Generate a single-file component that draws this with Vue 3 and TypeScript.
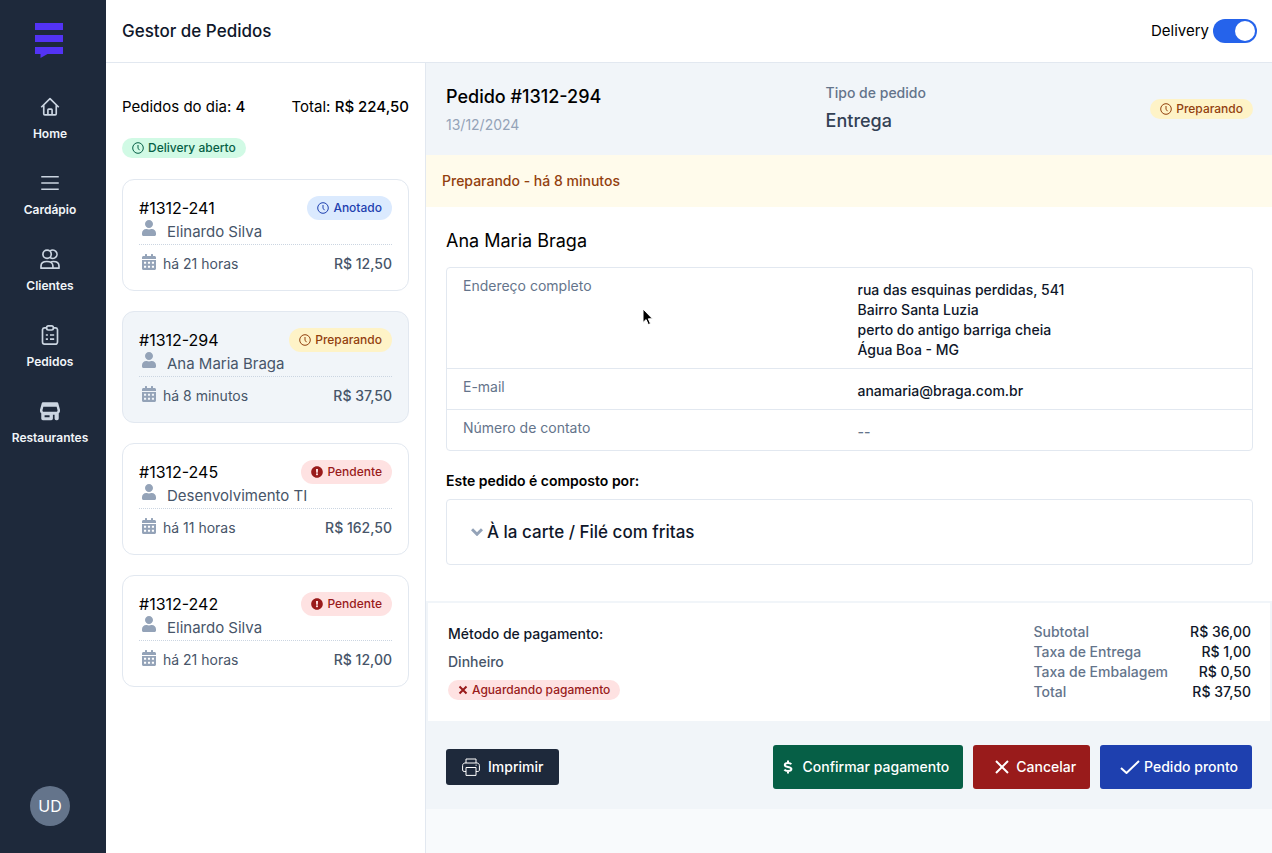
<script setup lang="ts">
import { ref } from 'vue'

type Status = 'anotado' | 'preparando' | 'pendente'

interface Order {
  id: string
  customer: string
  time: string
  total: string
  status: Status
}

const statusLabel: Record<Status, string> = {
  anotado: 'Anotado',
  preparando: 'Preparando',
  pendente: 'Pendente',
}

const orders: Order[] = [
  { id: '#1312-241', customer: 'Elinardo Silva', time: 'há 21 horas', total: 'R$ 12,50', status: 'anotado' },
  { id: '#1312-294', customer: 'Ana Maria Braga', time: 'há 8 minutos', total: 'R$ 37,50', status: 'preparando' },
  { id: '#1312-245', customer: 'Desenvolvimento TI', time: 'há 11 horas', total: 'R$ 162,50', status: 'pendente' },
  { id: '#1312-242', customer: 'Elinardo Silva', time: 'há 21 horas', total: 'R$ 12,00', status: 'pendente' },
]

const totals = [
  { label: 'Subtotal', value: 'R$ 36,00' },
  { label: 'Taxa de Entrega', value: 'R$ 1,00' },
  { label: 'Taxa de Embalagem', value: 'R$ 0,50' },
  { label: 'Total', value: 'R$ 37,50' },
]

const selected = ref('#1312-294')
const delivery = ref(true)
const expanded = ref(false)
</script>

<template>
  <div class="app">
    <aside class="sidebar">
      <svg class="logo" viewBox="0 0 28 35" aria-hidden="true">
        <path d="M0 0h28v7H0zM0 12h28v7H0zM0 24h28v7H12.500L5.500 35V31H0z" />
      </svg>
      <nav class="nav" aria-label="Principal">
        <a href="#home" class="nav-item">
          <svg viewBox="0 0 24 24" aria-hidden="true">
            <path d="M1.500 12.300 12 2l10.500 10.300M4.500 10v10.200c0 .7.500 1.300 1.300 1.300h12.400c.8 0 1.300-.6 1.300-1.300V10M9.500 21.500v-6c0-.6.400-1 1-1h3c.6 0 1 .4 1 1v6" />
          </svg>
          <span>Home</span>
        </a>
        <a href="#cardapio" class="nav-item">
          <svg viewBox="0 0 24 24" aria-hidden="true">
            <path d="M1.500 4.500h21M1.500 12h21M1.500 19.500h21" />
          </svg>
          <span>Cardápio</span>
        </a>
        <a href="#clientes" class="nav-item">
          <svg viewBox="0 0 24 24" aria-hidden="true">
            <circle cx="8.500" cy="6.300" r="5" />
            <path d="M12 2.600a5 5 0 1 1 0 7.400M1.200 23v-2.500c0-3.500 3-5.500 7-5.500s7.300 2 7.300 5.500V23zM12.500 15.800c1-.6 2.100-.8 3.500-.8 4 0 6.800 2 6.800 5.500V23h-7.300" />
          </svg>
          <span>Clientes</span>
        </a>
        <a href="#pedidos" class="nav-item">
          <svg viewBox="0 0 24 24" aria-hidden="true">
            <path d="M8 3.500H5.500a2.500 2.500 0 0 0-2.500 2V20.500a2.500 2.500 0 0 0 2.500 2.500h13a2.500 2.500 0 0 0 2.500-2.500V5.500a2.500 2.500 0 0 0-2.500-2H16" />
            <rect x="8" y="1" width="8" height="5" rx="2" />
            <path d="M7 12h2.500M7 17h2.500M12 12h5M12 17h5" />
          </svg>
          <span>Pedidos</span>
        </a>
        <a href="#restaurantes" class="nav-item">
          <svg viewBox="0 0 24 24" aria-hidden="true">
            <path class="solid" fill-rule="evenodd" d="M3.500 1.500h17c.7 0 1.200.4 1.400 1.100L24 10.500c.3 1.800-.3 3.300-1.500 4.200V21a2 2 0 0 1-2 2h-1a2 2 0 0 1-2-2v-4.500h-2V21a2 2 0 0 1-2 2h-10a2 2 0 0 1-2-2v-6.300C.3 13.800-.3 12.300 0 10.500l2.100-7.900c.2-.7.700-1.100 1.400-1.100zM4 7 3 11c-.2 1 .4 2 1.600 2h14.800c1.200 0 1.800-1 1.600-2l-1-4zM5.500 17v2.500h6V17z" />
          </svg>
          <span>Restaurantes</span>
        </a>
      </nav>
      <button type="button" class="avatar" aria-label="Conta UD">UD</button>
    </aside>

    <div class="content">
      <header class="topbar">
        <h1>Gestor de Pedidos</h1>
        <div class="switch">
          <label for="delivery">Delivery</label>
          <input id="delivery" v-model="delivery" type="checkbox" role="switch" />
        </div>
      </header>

      <div class="panes">
        <section class="orders" aria-label="Pedidos do dia">
          <div class="summary">
            <p>Pedidos do dia: <strong>4</strong></p>
            <p>Total: <strong>R$ 224,50</strong></p>
          </div>
          <span class="badge small aberto">
            <svg class="clock" viewBox="0 0 12 12" aria-hidden="true"><circle cx="6" cy="6" r="5.300" /><path d="M6 3v3.200l1.500 2" /></svg>
            Delivery aberto
          </span>
          <ul class="order-list">
            <li v-for="order in orders" :key="order.id">
              <button type="button" class="order" :class="{ active: order.id === selected }" @click="selected = order.id">
                <span class="row top">
                  <span>{{ order.id }}</span>
                  <span class="badge" :class="order.status">
                    <svg v-if="order.status === 'pendente'" class="alert" viewBox="0 0 512 512" aria-hidden="true">
                      <path d="M504 256c0 137-111 248-248 248S8 393 8 256C8 119 119 8 256 8s248 111 248 248zm-248 50c-25.400 0-46 20.600-46 46s20.600 46 46 46 46-20.600 46-46-20.600-46-46-46zm-43.700-165.300l7.400 136c.3 6.400 5.600 11.300 12 11.300h48.600c6.400 0 11.600-5 12-11.300l7.400-136c.4-6.900-5.100-12.700-12-12.700h-63.400c-6.900 0-12.400 5.800-12 12.700z" />
                    </svg>
                    <svg v-else class="clock" viewBox="0 0 12 12" aria-hidden="true"><circle cx="6" cy="6" r="5.300" /><path d="M6 3v3.200l1.500 2" /></svg>
                    {{ statusLabel[order.status] }}
                  </span>
                </span>
                <span class="row customer">
                  <svg class="glyph raised" viewBox="0 0 448 512" aria-hidden="true">
                    <path d="M224 256c70.700 0 128-57.300 128-128S294.700 0 224 0 96 57.300 96 128s57.300 128 128 128zm89.600 32h-16.700c-22.200 10.200-46.900 16-72.900 16s-50.600-5.800-72.900-16h-16.700C60.200 288 0 348.200 0 422.400V464c0 26.500 21.500 48 48 48h352c26.500 0 48-21.500 48-48v-41.600c0-74.200-60.200-134.400-134.400-134.400z" />
                  </svg>
                  <span>{{ order.customer }}</span>
                </span>
                <span class="row bottom">
                  <svg class="glyph date-glyph" viewBox="0 0 448 512" aria-hidden="true">
                    <path d="M400 64h-48V16c0-9-7-16-16-16h-32c-9 0-16 7-16 16v48H160V16c0-9-7-16-16-16h-32c-9 0-16 7-16 16v48H48C21.500 64 0 85.500 0 112v48h448v-48c0-26.500-21.500-48-48-48z" />
                    <path fill-rule="evenodd" d="M0 192h448v272c0 26.500-21.500 48-48 48H48c-26.500 0-48-21.500-48-48zM64 248v60h68v-60zM190 248v60h68v-60zM316 248v60h68v-60zM64 376v60h68v-60zM190 376v60h68v-60zM316 376v60h68v-60z" />
                  </svg>
                  <span class="time">{{ order.time }}</span>
                  <span class="price">{{ order.total }}</span>
                </span>
              </button>
            </li>
          </ul>
        </section>

        <main class="detail">
          <header class="detail-head">
            <div>
              <h2>Pedido #1312-294</h2>
              <p class="date">13/12/2024</p>
            </div>
            <div>
              <p class="kind-label">Tipo de pedido</p>
              <p class="kind">Entrega</p>
            </div>
            <span class="badge small preparando">
              <svg class="clock" viewBox="0 0 12 12" aria-hidden="true"><circle cx="6" cy="6" r="5.300" /><path d="M6 3v3.200l1.500 2" /></svg>
              Preparando
            </span>
          </header>
          <p class="banner">Preparando - há 8 minutos</p>

          <section class="info">
            <h3>Ana Maria Braga</h3>
            <dl class="facts">
              <div>
                <dt>Endereço completo</dt>
                <dd>rua das esquinas perdidas, 541<br />Bairro Santa Luzia<br />perto do antigo barriga cheia<br />Água Boa - MG</dd>
              </div>
              <div>
                <dt>E-mail</dt>
                <dd>anamaria@braga.com.br</dd>
              </div>
              <div>
                <dt>Número de contato</dt>
                <dd class="empty">--</dd>
              </div>
            </dl>
            <h4>Este pedido é composto por:</h4>
            <button type="button" class="dish" :aria-expanded="expanded" @click="expanded = !expanded">
              <svg viewBox="0 0 12 8" aria-hidden="true"><path d="M1 1.200 6 6.200l5-5" /></svg>
              <span>À la carte / Filé com fritas</span>
            </button>
          </section>

          <section class="payment">
            <div>
              <h5>Método de pagamento:</h5>
              <p>Dinheiro</p>
              <span class="badge small pendente">
                <svg class="cross" viewBox="0 0 10 10" aria-hidden="true"><path d="M1.500 1.500l7 7M8.500 1.500l-7 7" /></svg>
                Aguardando pagamento
              </span>
            </div>
            <table>
              <tbody>
                <tr v-for="line in totals" :key="line.label">
                  <th scope="row">{{ line.label }}</th>
                  <td>{{ line.value }}</td>
                </tr>
              </tbody>
            </table>
          </section>

          <footer class="actions">
            <button type="button" class="btn print">
              <svg viewBox="0 0 18 18" aria-hidden="true">
                <path d="M4 5V1h10v4M4 13.500H2.200A1.600 1.600 0 0 1 .6 12V7.500C.6 6 1.800 5 3 5h12c1.200 0 2.400 1 2.400 2.500V12c0 .9-.7 1.500-1.600 1.500H14M4 9.500h10v7.900H4zM13.500 7.200h1.200" />
              </svg>
              Imprimir
            </button>
            <div class="group">
              <button type="button" class="btn confirm">
                <svg viewBox="0 0 10 14" aria-hidden="true">
                  <path d="M8.300 4.200C7.700 3.300 6.500 3 5 3 3.200 3 1.800 3.600 1.800 4.900 1.800 7.800 8.400 6 8.400 9c0 1.400-1.500 2-3.400 2-1.600 0-2.900-.4-3.600-1.400M5 .5V3M5 11v2.500" />
                </svg>
                Confirmar pagamento
              </button>
              <button type="button" class="btn cancel">
                <svg viewBox="0 0 14 14" aria-hidden="true"><path d="M1 1l12 12M13 1 1 13" /></svg>
                Cancelar
              </button>
              <button type="button" class="btn ready">
                <svg viewBox="0 0 20 14" aria-hidden="true"><path d="M1 8l5.500 5L19 1" /></svg>
                Pedido pronto
              </button>
            </div>
          </footer>
        </main>
      </div>
    </div>

    <svg class="pointer" viewBox="0 0 12 18" aria-hidden="true">
      <path d="M1 1v13.500l3.100-2.900 2.200 5 2.200-1-2.200-4.800H10.500z" />
    </svg>
  </div>
</template>

<style>
body {
  margin: 0;
  background: #f8fafc;
}
</style>

<style scoped>
.app {
  position: relative;
  display: flex;
  min-height: 100vh;
  font-family: Inter, "Liberation Sans", sans-serif;
  font-size: 16px;
  line-height: 24px;
  color: #000;
}
.app *,
.app *::before {
  box-sizing: border-box;
}
h1, h2, h3, h4, h5, p, ul, dl, dd {
  margin: 0;
  padding: 0;
  font-weight: 400;
}
button {
  font: inherit;
  color: inherit;
  cursor: pointer;
}
svg {
  flex: none;
}

/* Sidebar */
.sidebar {
  display: flex;
  flex: none;
  flex-direction: column;
  align-items: center;
  width: 106px;
  padding: 23px 6px 27px 0;
  background: #1e293b;
}
.logo {
  width: 28px;
  height: 35px;
  margin-right: 2px;
  fill: #5333f5;
}
.nav {
  display: flex;
  flex-direction: column;
  gap: 30px;
  margin-top: 39px;
}
.nav-item {
  display: flex;
  flex-direction: column;
  align-items: center;
  gap: 8px;
  font-size: 12px;
  font-weight: 600;
  line-height: 18px;
  color: #f1f5f9;
  text-decoration: none;
}
.nav-item svg {
  width: 20px;
  height: 20px;
  fill: none;
  stroke: #cbd5e1;
  stroke-width: 2;
  stroke-linejoin: round;
}
.nav-item .solid {
  fill: #cbd5e1;
  stroke: none;
}
.avatar {
  width: 40px;
  height: 40px;
  margin-top: auto;
  padding: 0;
  border: 0;
  border-radius: 50%;
  background: #64748b;
  color: #fff;
}

/* Top bar */
.content {
  display: flex;
  flex: 1;
  flex-direction: column;
  min-width: 0;
}
.topbar {
  display: flex;
  align-items: center;
  justify-content: space-between;
  padding: 17px 15px 17px 16px;
  border-bottom: 1px solid #e2e8f0;
  background: #fff;
}
h1 {
  font-size: 17px;
  font-weight: 500;
  line-height: 28px;
  color: #0f172a;
}
.switch {
  display: flex;
  align-items: center;
  gap: 4px;
  font-size: 15px;
}
.switch input {
  display: flex;
  align-items: center;
  width: 44px;
  height: 24px;
  margin: 0;
  padding: 2px;
  border-radius: 12px;
  background: #cbd5e1;
  appearance: none;
  cursor: pointer;
}
.switch input::before {
  width: 20px;
  height: 20px;
  border-radius: 50%;
  background: #fff;
  content: "";
}
.switch input:checked {
  justify-content: flex-end;
  background: #2563eb;
}

/* Order list */
.panes {
  display: flex;
  flex: 1;
}
.orders {
  flex: none;
  width: 320px;
  padding: 32px 16px;
  border-right: 1px solid #e2e8f0;
  background: #fff;
}
.summary {
  display: flex;
  justify-content: space-between;
  margin-bottom: 19px;
  font-size: 15px;
}
strong {
  font-weight: 500;
}
.badge {
  display: flex;
  align-items: center;
  gap: 4px;
  width: fit-content;
  padding: 0 10px;
  border-radius: 12px;
  font-size: 12px;
  font-weight: 500;
  line-height: 24px;
  white-space: nowrap;
}
.badge.small {
  line-height: 20px;
}
.badge svg {
  width: 12px;
  height: 12px;
}
.clock {
  fill: none;
  stroke: currentColor;
}
.alert {
  fill: currentColor;
}
.badge .cross {
  width: 10px;
  height: 10px;
  fill: none;
  stroke: currentColor;
  stroke-width: 2;
}
.aberto {
  background: #d1fae5;
  color: #065f46;
}
.anotado {
  background: #dbeafe;
  color: #1e40af;
}
.preparando {
  background: #fef3c7;
  color: #92400e;
}
.pendente {
  background: #fee2e2;
  color: #991b1b;
}
.order-list {
  display: flex;
  flex-direction: column;
  gap: 20px;
  margin-top: 21px;
  list-style: none;
}
.order {
  display: block;
  width: 100%;
  padding: 16px;
  border: 1px solid #e2e8f0;
  border-radius: 12px;
  background: #fff;
  text-align: left;
}
.order.active {
  background: #f1f5f9;
}
.row {
  display: flex;
  align-items: center;
}
.row.top {
  justify-content: space-between;
}
.row.customer {
  gap: 11px;
  border-bottom: 1px dotted #cbd5e1;
  font-size: 15px;
  color: #475569;
}
.row.bottom {
  padding-top: 9px;
  font-size: 14px;
  line-height: 20px;
  color: #475569;
}
.glyph {
  width: 14px;
  height: 16px;
  margin-left: 3px;
  fill: #94a3b8;
}
.glyph.raised {
  margin-bottom: 8px;
}
.date-glyph {
  margin-bottom: 4px;
}
.time {
  margin-left: 7px;
}
.price {
  margin-left: auto;
  font-weight: 500;
}

/* Order detail */
.detail {
  flex: 1;
  min-width: 0;
}
.detail-head {
  display: flex;
  align-items: center;
  justify-content: space-between;
  padding: 20px 19px 20px 20px;
  background: #f1f5f9;
}
h2,
.kind {
  font-size: 18px;
  font-weight: 500;
  line-height: 28px;
}
.date,
.kind-label {
  font-size: 14px;
  line-height: 20px;
}
.date {
  margin-top: 4px;
  color: #94a3b8;
}
.kind-label {
  font-weight: 500;
  color: #64748b;
}
.kind {
  margin-top: 4px;
  color: #334155;
}
.banner {
  padding: 16px;
  background: #fffbeb;
  font-size: 14px;
  font-weight: 500;
  line-height: 20px;
  color: #92400e;
}
.info {
  padding: 20px 19px 36px 20px;
  background: #fff;
}
h3 {
  font-size: 18px;
  line-height: 28px;
}
.facts {
  margin-top: 12px;
  border: 1px solid #e2e8f0;
  border-radius: 4px;
  font-size: 14px;
  line-height: 20px;
}
.facts > div {
  display: grid;
  grid-template-columns: 1fr 1fr;
  gap: 16px;
  padding: 8px 16px 0;
}
.facts > div + div {
  border-top: 1px solid #e2e8f0;
}
dt {
  color: #64748b;
}
dd {
  padding: 4px 0 8px;
  font-weight: 500;
  color: #0f172a;
}
dd.empty {
  color: #64748b;
}
h4 {
  margin-top: 20px;
  font-size: 14px;
  font-weight: 600;
  line-height: 20px;
}
.dish {
  display: flex;
  align-items: center;
  gap: 4px;
  width: 100%;
  margin-top: 8px;
  padding: 18px 24px;
  border: 1px solid #e2e8f0;
  border-radius: 4px;
  background: #fff;
  font-size: 17px;
  font-weight: 500;
  line-height: 28px;
  color: #0f172a;
}
.dish svg {
  width: 12px;
  height: 8px;
  fill: none;
  stroke: #94a3b8;
  stroke-width: 3;
}

/* Payment */
.payment {
  display: flex;
  justify-content: space-between;
  padding: 19px 19px 19px 20px;
  border: 2px solid #f1f5f9;
  background: #fff;
  font-size: 14px;
  line-height: 20px;
}
h5 {
  font-size: 14px;
  font-weight: 500;
  line-height: 24px;
  color: #0f172a;
}
.payment p {
  margin: 6px 0 8px;
  font-weight: 500;
  color: #475569;
}
table {
  align-self: flex-start;
  border-spacing: 0;
}
th,
td {
  padding: 0;
  font-weight: 500;
}
th {
  padding-right: 22px;
  text-align: left;
  color: #64748b;
}
td {
  text-align: right;
  color: #0f172a;
}

/* Actions */
.actions {
  display: flex;
  align-items: center;
  justify-content: space-between;
  padding: 22px 20px 20px;
  background: #f1f5f9;
}
.group {
  display: flex;
  gap: 10px;
}
.btn {
  display: flex;
  align-items: center;
  padding: 12px 14px;
  border: 0;
  border-radius: 3px;
  font-size: 14px;
  font-weight: 500;
  line-height: 20px;
  color: #fff;
}
.btn svg {
  fill: none;
  stroke: #fff;
  stroke-width: 2;
}
.print {
  padding: 8px 16px;
  background: #1e293b;
}
.btn.print svg {
  width: 18px;
  height: 18px;
  margin-right: 8px;
  stroke-width: 1;
}
.confirm {
  padding-left: 10px;
  background: #065f46;
}
.confirm svg {
  width: 10px;
  height: 14px;
  margin-right: 10px;
}
.cancel {
  padding-left: 22px;
  background: #991b1b;
}
.cancel svg {
  width: 14px;
  height: 14px;
  margin-right: 7px;
}
.ready {
  padding-left: 20px;
  background: #1e40af;
}
.ready svg {
  width: 20px;
  height: 14px;
  margin-right: 4px;
}

.pointer {
  position: absolute;
  top: 308px;
  left: 642px;
  width: 12px;
  height: 18px;
  fill: #000;
  stroke: #fff;
  pointer-events: none;
}
</style>
